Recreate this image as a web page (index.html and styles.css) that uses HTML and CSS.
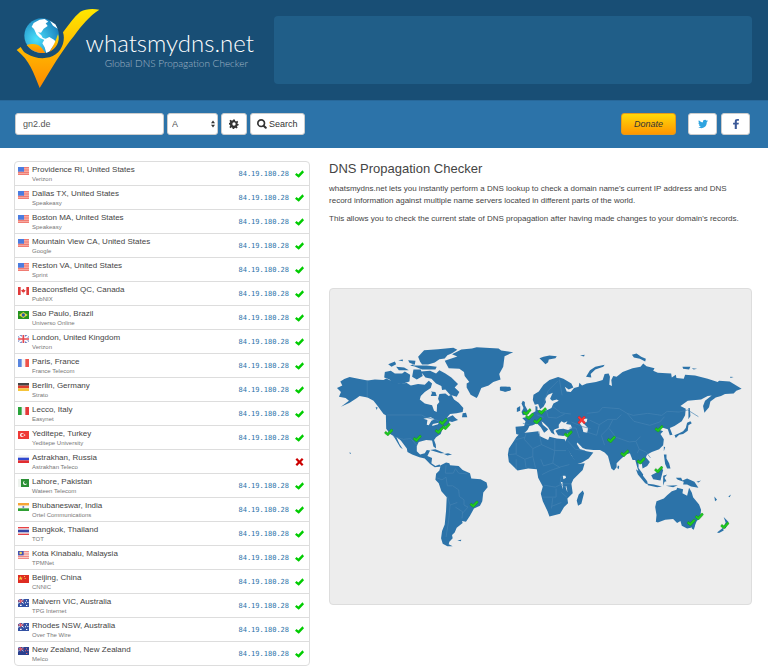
FILE: index.html
```html
<!DOCTYPE html>
<html lang="en">
<head>
    <meta charset="UTF-8">
    <meta name="viewport" content="width=device-width, initial-scale=1.0">
    <title>whatsmydns.net - Global DNS Propagation Checker</title>
    <link rel="stylesheet" href="styles.css">
</head>
<body>
    <!-- Shared icons and flags -->
    <svg class="sprite" aria-hidden="true">
        <defs>
            <symbol id="ok" viewBox="0 0 24 20"><path d="M0 12l4-5 5 4L20 0l4 5L10 20z"/></symbol>
            <symbol id="fail" viewBox="0 0 20 20"><path d="M4 0l6 6 6-6 4 4-6 6 6 6-4 4-6-6-6 6-4-4 6-6-6-6z"/></symbol>
            <symbol id="us" viewBox="0 0 33 24"><path fill="#f8b5ac" d="M0 0h33v24H0z"/><path stroke="#ef7068" stroke-width="3" d="M0 2h33M0 9h33M0 16h33M0 22h33"/><path fill="#4a7ce0" d="M0 0h18v14H0z"/></symbol>
            <symbol id="ca" viewBox="0 0 33 24"><path fill="#fff" d="M0 0h33v24H0z"/><path fill="#e03a3a" d="M0 0h8v24H0zM25 0h8v24h-8zM16 5l3 4 4 1-4 6h-2v4h-1v-4h-3l-4-6 4-1z"/></symbol>
            <symbol id="br" viewBox="0 0 33 24"><path fill="#259321" d="M0 0h33v24H0z"/><path fill="#e8dc42" d="M16 3l13 9-13 9L3 12z"/><circle cx="16" cy="12" r="5" fill="#2b59a4"/></symbol>
            <symbol id="gb" viewBox="0 0 33 24"><path fill="#6a7ec2" d="M0 0h33v24H0z"/><path stroke="#fff" stroke-width="5" d="M0 0l33 24M33 0L0 24"/><path stroke="#fff" stroke-width="9" d="M16 0v24M0 12h33"/><path stroke="#e34850" stroke-width="5" d="M16 0v24M0 12h33"/></symbol>
            <symbol id="fr" viewBox="0 0 33 24"><path fill="#f3f3f3" d="M0 0h33v24H0z"/><path fill="#5885df" d="M0 0h11v24H0z"/><path fill="#ef5249" d="M22 0h11v24H22z"/></symbol>
            <symbol id="de" viewBox="0 0 33 24"><path fill="#444" d="M0 0h33v8H0z"/><path fill="#df3b2d" d="M0 8h33v8H0z"/><path fill="#f5c43b" d="M0 16h33v8H0z"/></symbol>
            <symbol id="it" viewBox="0 0 33 24"><path fill="#f3f3f3" d="M0 0h33v24H0z"/><path fill="#29a43b" d="M0 0h11v24H0z"/><path fill="#e6393a" d="M22 0h11v24H22z"/></symbol>
            <symbol id="tr" viewBox="0 0 33 24"><path fill="#ee3a36" d="M0 0h33v24H0z"/><circle cx="12" cy="12" r="6" fill="#fff"/><circle cx="14" cy="12" r="4" fill="#ee3a36"/><path fill="#fff" d="M18 10l5 2-5 3z"/></symbol>
            <symbol id="ru" viewBox="0 0 33 24"><path fill="#f3f3f3" d="M0 0h33v8H0z"/><path fill="#2f48cf" d="M0 8h33v8H0z"/><path fill="#e22d30" d="M0 16h33v8H0z"/></symbol>
            <symbol id="pk" viewBox="0 0 33 24"><path fill="#eef3ee" d="M0 0h9v24H0z"/><path fill="#2b8f35" d="M9 0h24v24H9z"/><circle cx="21" cy="12" r="6" fill="#fff"/><circle cx="23" cy="10" r="5" fill="#2b8f35"/></symbol>
            <symbol id="in" viewBox="0 0 33 24"><path fill="#f6a537" d="M0 0h33v8H0z"/><path fill="#f6f6f6" d="M0 8h33v8H0z"/><path fill="#2fa034" d="M0 16h33v8H0z"/><circle cx="16" cy="12" r="3" fill="#6b78c4"/></symbol>
            <symbol id="th" viewBox="0 0 33 24"><path fill="#e64145" d="M0 0h33v24H0z"/><path fill="#f6f6f6" d="M0 4h33v16H0z"/><path fill="#3745a5" d="M0 8h33v8H0z"/></symbol>
            <symbol id="my" viewBox="0 0 33 24"><path fill="#fbdcd9" d="M0 0h33v24H0z"/><path stroke="#ee7a75" stroke-width="3" d="M0 2h33M0 9h33M0 16h33M0 22h33"/><path fill="#4453b5" d="M0 0h17v13H0z"/><circle cx="8" cy="6" r="4" fill="#f3d95a"/></symbol>
            <symbol id="cn" viewBox="0 0 33 24"><path fill="#de2b22" d="M0 0h33v24H0z"/><path fill="#f7cf3e" d="M8 3l2 5h5l-4 3 2 5-5-3-5 3 2-5-4-3h5zM18 3h3v3h-3zM20 9h3v3h-3z"/></symbol>
            <symbol id="au" viewBox="0 0 33 24"><path fill="#3351a3" d="M0 0h33v24H0z"/><path stroke="#fff" stroke-width="3" d="M0 0l17 13M17 0L0 13"/><path stroke="#e8515a" stroke-width="3" d="M8 0v13M0 6h17"/><path fill="#fff" d="M6 17h5v4H6zM24 4h3v3h-3zM21 10h3v3h-3zM28 9h3v3h-3zM24 18h4v3h-4z"/></symbol>
            <symbol id="nz" viewBox="0 0 33 24"><path fill="#2b408f" d="M0 0h33v24H0z"/><path stroke="#a9b2dd" stroke-width="3" d="M0 0l17 13M17 0L0 13"/><path stroke="#e8515a" stroke-width="3" d="M8 0v13M0 6h17"/><path fill="#ea6670" d="M24 4h3v3h-3zM21 10h3v3h-3zM28 9h3v3h-3zM24 18h4v3h-4z"/></symbol>
        </defs>
    </svg>

    <!-- Header -->
    <header class="header">
        <a href="/" class="brand">
            <svg class="brand-logo" viewBox="0 0 252 240" aria-hidden="true">
                <defs>
                    <linearGradient id="gold" x1="0" y1="0" x2="0" y2="1">
                        <stop offset="0" stop-color="#ffe800"/>
                        <stop offset="1" stop-color="#ff8a00"/>
                    </linearGradient>
                    <radialGradient id="sea" cx=".35" cy=".6" r=".75">
                        <stop offset="0" stop-color="#4be0fb"/>
                        <stop offset="1" stop-color="#1579b8"/>
                    </radialGradient>
                </defs>
                <path fill="url(#gold)" d="M2 126l12-9c8 14 12 17 20 21 24 15 62 18 85 1 22-15 29-46 22-66 16-22 32-45 52-62 16-9 38-10 57-6-30 19-54 48-76 79-38 46-68 99-103 156C52 193 42 159 2 126z"/>
                <circle cx="77" cy="83" r="52" fill="url(#sea)"/>
                <path fill="#fff" d="M53 45l18-10 15-2 11 8-8 5 6 8-12 8-8 12-9-1 10 9 4 7 10 4-3 4-15-7-10-10-8-17-7-7zM86 94l14-7 15 9 6 9-12 12-8 13-10 5-5-17-7-12zM102 39l16 10 7 13-14-9z"/>
                <path fill="url(#gold)" d="M32 111c19-6 38-2 46 10l10 14c-19 2-40-4-56-24zM126 79c7 20-5 44-26 53 13-17 20-36 26-53z"/>
            </svg>
            <span class="brand-text">
                <span class="brand-name">whatsmydns.net</span>
                <span class="brand-tagline">Global DNS Propagation Checker</span>
            </span>
        </a>
        <div class="banner"></div>
    </header>

    <!-- Search bar -->
    <div class="toolbar">
        <form class="search" action="/">
            <input class="field domain" type="text" value="gn2.de" aria-label="Domain name">
            <span class="select-wrap">
                <select class="field type" aria-label="Record type">
                    <option>A</option>
                    <option>AAAA</option>
                    <option>CNAME</option>
                    <option>MX</option>
                    <option>NS</option>
                    <option>TXT</option>
                </select>
                <svg class="arrows" viewBox="0 0 10 18" aria-hidden="true"><path d="M5 0l5 7H0zM5 18l5-7H0z"/></svg>
            </span>
            <button class="btn btn-icon" type="button" aria-label="Settings">
                <svg class="icon" viewBox="0 0 24 24" aria-hidden="true"><path fill-rule="evenodd" d="M10 1h4l1 4 2 1 3-2 2 3-2 3 1 2 2 0v3l-3 1-1 2 2 2-3 3-3-2-2 1-1 2h-3l-1-3-2-1-3 2-2-3 2-3-1-2-3-1v-3l3-1 1-2-2-3 3-2 3 2 2-1zM12 8a4 4 0 1 0 0 8 4 4 0 1 0 0-8z"/></svg>
            </button>
            <button class="btn" type="submit">
                <svg class="icon" viewBox="0 0 24 24" aria-hidden="true"><circle cx="10" cy="10" r="8" fill="none" stroke="#333" stroke-width="4"/><path stroke="#333" stroke-width="5" stroke-linecap="round" d="M16 16l5 5"/></svg>
                Search
            </button>
        </form>
        <div class="links">
            <a href="/donate" class="donate">Donate</a>
            <a href="/twitter" class="btn btn-social" aria-label="Twitter">
                <svg class="icon" viewBox="0 0 24 24" aria-hidden="true"><path fill="#2fa4e0" d="M24 5l-3 3c0 10-7 14-13 14-3 0-6-1-8-2 3 0 5-1 7-2-2 0-4-1-5-4h3c-3-1-4-3-4-5l2 1C1 8 1 5 2 3c3 3 6 5 10 5-1-4 2-6 5-6 1 0 3 1 4 2l3-1-2 3z"/></svg>
            </a>
            <a href="/facebook" class="btn btn-social" aria-label="Facebook">
                <svg class="icon" viewBox="0 0 24 24" aria-hidden="true"><path fill="#3b5998" d="M9 24V13H5V9h4V6c0-4 2-6 6-6h4v4h-3c-2 0-2 1-2 2v3h5l-1 4h-4v11z"/></svg>
            </a>
        </div>
    </div>

    <!-- Main Content -->
    <main class="content">
        <table class="servers">
            <tbody>
                <tr><td class="flag"><svg><use href="#us"/></svg></td><td class="place">Providence RI, United States<small>Verizon</small></td><td class="ip">84.19.180.28</td><td class="status"><svg><use href="#ok"/></svg></td></tr>
                <tr><td class="flag"><svg><use href="#us"/></svg></td><td class="place">Dallas TX, United States<small>Speakeasy</small></td><td class="ip">84.19.180.28</td><td class="status"><svg><use href="#ok"/></svg></td></tr>
                <tr><td class="flag"><svg><use href="#us"/></svg></td><td class="place">Boston MA, United States<small>Speakeasy</small></td><td class="ip">84.19.180.28</td><td class="status"><svg><use href="#ok"/></svg></td></tr>
                <tr><td class="flag"><svg><use href="#us"/></svg></td><td class="place">Mountain View CA, United States<small>Google</small></td><td class="ip">84.19.180.28</td><td class="status"><svg><use href="#ok"/></svg></td></tr>
                <tr><td class="flag"><svg><use href="#us"/></svg></td><td class="place">Reston VA, United States<small>Sprint</small></td><td class="ip">84.19.180.28</td><td class="status"><svg><use href="#ok"/></svg></td></tr>
                <tr><td class="flag"><svg><use href="#ca"/></svg></td><td class="place">Beaconsfield QC, Canada<small>PubNIX</small></td><td class="ip">84.19.180.28</td><td class="status"><svg><use href="#ok"/></svg></td></tr>
                <tr><td class="flag"><svg><use href="#br"/></svg></td><td class="place">Sao Paulo, Brazil<small>Universo Online</small></td><td class="ip">84.19.180.28</td><td class="status"><svg><use href="#ok"/></svg></td></tr>
                <tr><td class="flag"><svg><use href="#gb"/></svg></td><td class="place">London, United Kingdom<small>Verizon</small></td><td class="ip">84.19.180.28</td><td class="status"><svg><use href="#ok"/></svg></td></tr>
                <tr><td class="flag"><svg><use href="#fr"/></svg></td><td class="place">Paris, France<small>France Telecom</small></td><td class="ip">84.19.180.28</td><td class="status"><svg><use href="#ok"/></svg></td></tr>
                <tr><td class="flag"><svg><use href="#de"/></svg></td><td class="place">Berlin, Germany<small>Strato</small></td><td class="ip">84.19.180.28</td><td class="status"><svg><use href="#ok"/></svg></td></tr>
                <tr><td class="flag"><svg><use href="#it"/></svg></td><td class="place">Lecco, Italy<small>Easynet</small></td><td class="ip">84.19.180.28</td><td class="status"><svg><use href="#ok"/></svg></td></tr>
                <tr><td class="flag"><svg><use href="#tr"/></svg></td><td class="place">Yeditepe, Turkey<small>Yeditepe University</small></td><td class="ip">84.19.180.28</td><td class="status"><svg><use href="#ok"/></svg></td></tr>
                <tr><td class="flag"><svg><use href="#ru"/></svg></td><td class="place">Astrakhan, Russia<small>Astrakhan Teleco</small></td><td class="ip"></td><td class="status failed"><svg><use href="#fail"/></svg></td></tr>
                <tr><td class="flag"><svg><use href="#pk"/></svg></td><td class="place">Lahore, Pakistan<small>Wateen Telecom</small></td><td class="ip">84.19.180.28</td><td class="status"><svg><use href="#ok"/></svg></td></tr>
                <tr><td class="flag"><svg><use href="#in"/></svg></td><td class="place">Bhubaneswar, India<small>Ortel Communications</small></td><td class="ip">84.19.180.28</td><td class="status"><svg><use href="#ok"/></svg></td></tr>
                <tr><td class="flag"><svg><use href="#th"/></svg></td><td class="place">Bangkok, Thailand<small>TOT</small></td><td class="ip">84.19.180.28</td><td class="status"><svg><use href="#ok"/></svg></td></tr>
                <tr><td class="flag"><svg><use href="#my"/></svg></td><td class="place">Kota Kinabalu, Malaysia<small>TPMNet</small></td><td class="ip">84.19.180.28</td><td class="status"><svg><use href="#ok"/></svg></td></tr>
                <tr><td class="flag"><svg><use href="#cn"/></svg></td><td class="place">Beijing, China<small>CNNIC</small></td><td class="ip">84.19.180.28</td><td class="status"><svg><use href="#ok"/></svg></td></tr>
                <tr><td class="flag"><svg><use href="#au"/></svg></td><td class="place">Malvern VIC, Australia<small>TPG Internet</small></td><td class="ip">84.19.180.28</td><td class="status"><svg><use href="#ok"/></svg></td></tr>
                <tr><td class="flag"><svg><use href="#au"/></svg></td><td class="place">Rhodes NSW, Australia<small>Over The Wire</small></td><td class="ip">84.19.180.28</td><td class="status"><svg><use href="#ok"/></svg></td></tr>
                <tr><td class="flag"><svg><use href="#nz"/></svg></td><td class="place">New Zealand, New Zealand<small>Melco</small></td><td class="ip">84.19.180.28</td><td class="status"><svg><use href="#ok"/></svg></td></tr>
            </tbody>
        </table>

        <section class="info">
            <h1>DNS Propagation Checker</h1>
            <p>whatsmydns.net lets you instantly perform a DNS lookup to check a domain name's current IP address and DNS record information against multiple name servers located in different parts of the world.</p>
            <p>This allows you to check the current state of DNS propagation after having made changes to your domain's records.</p>

            <svg class="map" viewBox="0 0 1266 948" role="img" aria-label="Propagation map">
                <!-- Americas -->
                <g transform="translate(-15 138)">
                    <path class="land" d="M36 160l16-8-6-12 12-7 16-6 26 5 28 5 22-3 26 2 8-5 16 8 22 7 24-1 12 7 22-4 20 2 12-12 10 8-4 14-18 12-12 12-3 10 15 12 22 6 6 16 8 4 1-22 7-8-4-10 4-14 18-2 10 8 8-4 8 14 14 10 14 16-2 12-18 4-20 2-10 12 18-8 8 8 8 6-18 6-8-2-2 10-12 6-8 10-4 12-14 10-6 8 5 14 1 12-8-6-4-18-18-2-22 6-6 12v16l10 10 14-4 6-10 10 2-8 16 14 6-2 16 12 8 12-4 6 6-20 2-14-10-16-16-16-4-22-8-14-8-2-10-18-24-14-12 10 22 10 16-8-6-12-20-8-14-10-6-12-16-1-40-7-4-16-22-14-18-18-10-24-4-8 6-22 14-26 12 24-18-10-8-20-4 6-14z"/>
                    <path class="land" d="M348 392L364 384 374 386 376 392 402 394 414 406 436 416 440 432 468 434 486 444 489 458 476 474 473 500 466 514 448 522 436 544 424 562 412 560 414 566 396 580 390 594 382 602 384 612 374 622 372 630 384 636 368 636 354 628 349 612 352 590 360 570 364 530 366 488 350 470 342 446 332 436 334 418 344 408z"/>
                    <path class="land" d="M360 78l38-13-16-7 28-14 32-3 14-4 66 4 8 6 36 5-26 12-4 32-12 22 4 16-22 8-14 10-22 8-10 24-4 6-18-10-12-22 0-12 8-4-14-18-2-12-14-10-32-2zM526 156l30 0 4 10-18 5-16-4zM280 66l18-20 42-3 46-4 12 6-16 10-14 6-8 10-16 2-14 10-20 6-18 0-6-8zM288 110l28-2 18 8 10-10 18 10 18 12 20 20-10 10 14 14-8 14-20-6-14-16-10 2-2-12-16-8-14-14-18-4zM180 112l18-4 12 8 22 0 8-6 16 10-2 20-24 8-26-2-10-12-16-6zM190 88l20-8 4 8-14 8zM214 96l24 2 14 8-30 0zM250 76l22 2-2 12-16-6zM266 104l22 0 6 20-18 10-14-8zM318 170l14 2 4 12-18 0 4-10zM262 92h44l30 4-4 8-40 0zM414 236l10-2 4 14-16 0zM316 346l16-2 28 12-12 0zM358 358l12-2 12 4-14 3zM152 218l6 0-2 8zM398 618l12-2-2 5zM74 352l4 4-3 3zM220 76l14-2v5zM256 92l10-4v6z"/>
                    <path class="water" d="M296 252l22-4 12 6-10 4-8 14-6-2 2-14zM324 268l18-4-2 5-18 5z"/>
                    <path class="border" d="M127 137v51M186 241h104l16 8 26 6 20 8 20-10M206 306l30 8 22-2 18 20M364 392l-2 24 24 0 6-14 10 14 26 2M336 430l16 6 12-8 4 26 16 0 18 12 2 20 14 10 0 16 12 6-18 20M368 486l8 26 22-8M376 512l-4 46-8 50M392 518l22 14-2 20"/>
                </g>
                <!-- Europe, Africa, Asia, Oceania -->
                <g transform="translate(510 138)">
                    <path class="land" d="M100 196l2-16 16-10 14-20 18-14 26-9 16 5 24 14 6 12-14 6-12-8 6 14 12 2 10-12 14-4 2-12 8 8 14-6 28-4 20-6 6-18 12-2 4 10-2 24 8 4-2-18 6-12 10 2 18-14 30-12 24-4 8-10 10 8 24 6-4 8 14 6 40 2 2 12 12-8 2 10 22 2 4-12 30 2 38 10 30 10 4-4 32 2 36 22-16 6-8 8-26 2-12 6-16 4-16 12-4 18-14 16-4-20 6-16 20-16-12 2-20 10-40 4-22 16 16 8-2 20-10 18-22 14-14 6 8 20-8 2-6-18-20-6-10 6 16 6-8 8 10 16-2 18-12 12-22 8-14 8-4 8 12 14-8 12-14 8-2-14-10-6 0 18 14 20-2 10-10-12-6-20-6-22-8 0-8-20-12 4-16 14-12 12 0 12-8 10-8-6-10-38-10-10-14-8-20 0-22-2-10-4-16-16-2 4 10 16 20 6 20 4-14 18-20 12-18 6-4-12-14-22-14-24-2-8 8-16 2-12-14 8-16-2-8-14 10-4 14-2 14 4 12-6-4-10-14-2 4-8-10 4-8-4-8 10 0 10-12 4-4 4 4 12-10-6-10-16-14-14-6-4 4 10 16 14-4 4-8 6-10-16-12-12-12 6-10 2-6 12-10 10-12 6-12-4-2-22 26-2 4-14-10-10 18-4 14-12 8-4 0-16 6 2 0 10 22 4 20-10 6-14 16-8-6-4-14 4-6-6 8-18-14 6-10 12 4 10-8 14-10 8-6-16-10 2z"/>
                    <path class="land" d="M62 296l36-4 18-2 4 14 26 12 4-10 22 6 24 2 6 20 14 28 14 18 4 8 22-2-6 20-28 28-6 14 4 28-16 16 2 14-12 12-12 20-32 8-6-16-14-30-6-22 6-22-14-26-4-26-26-2-32 6-26-26-3-22 3-18 16-24 6-10z"/>
                    <path class="land" d="M250 468l4 8-8 32-10 6-4-16 6-18zM66 232l6-12-6-14 4-8 6 4 0 10 10 18 2 8-18 4zM52 220l10-6 0 14-10 4zM4 156l14 0 16 2-4 10-14 2-12-4zM120 70l12-4 18-4 22 2-4 6-20 4-2 8-8 6-8-8zM242 62l14-2-2 5zM260 126l12-20 16-10 28-6-4 6-24 8-14 14 2 10zM398 60l14-4 14 10 14 6-2 8-16-8-18-4zM550 96l24 0-4 8-18-2zM578 100l16 2-10 2zM694 126l10 1-10 3zM568 220h4l2 24-6 10zM564 264l10-4 4 6-10 6-2 16-14 10-12 2-10 10-4-8 14-6 12-6 8-10zM494 336l4 2-4 12zM356 392l4 4-2 8-4-4zM410 404l14 10 20 26 2 10-8-4-22-26zM446 448l18 2 24 6-14 2-28-6zM456 422l16-8 12-16 8 8-8 32-22-4zM492 424l12-4-8 10 6 10-6 2-4 12zM494 360l8 0 0 12 8 14 4 16-10 0-6-14zM530 430l16 0 4 8 14-6 22 10 12 18-22-4-12-6-12 0 2-8-18-6zM500 454l36-2-14 6zM592 442l14-4-8 6zM646 486l8 10-6 4zM688 486l8-6-4 8z"/>
                    <path class="land" d="M472 500l22-8 10-10 14-12 14-4 2-6 18 4-2 12 14 8 6-24 8 14 4 14 18 22 6 16-2 20-12 16-6 16-22 4-16-8-4-14-10 6-12-12-24 2-22 8-6-2 2-20-4-24zM580 576l8-2-4 12-6-4zM674 548l14 14-8 20-6-4 6-14zM654 594l18-14 2 8-14 8z"/>
                    <path class="water" d="M250 252l14 0-2 10-10 4 14 14-2 14-12-2-4-16-8-12zM190 424l8 0 2 6-8 4zM184 442l6 22 0-20zM198 456l6 18-2-18z"/>
                    <path class="border" d="M46 316l30-8M80 296l-6 18 26 28 26-12-8-40M28 360l22-2 0-34M50 360l26 14 24-8 0-24M126 330l40 18 0-36M166 348l34 0M166 348l-6 38-28 8-8-20M76 374l4 28M50 374v30M100 366l8 34M160 386l20 12 30-8M128 420l24-12 30-10M134 452l34 6 20-10 26 0M130 488h40l0-26M160 490l-4 32M156 516l30-12M186 474l16 14M186 424l-4 24 20 12M132 208l14-40 30-30M180 134l8 48M140 222l6 26 26 2 24-12M158 214l26 20 30 4M112 240l20 8M70 266l20 4M216 262l34 14 24 6M262 236l36-4 12-14 50 4 24 14 18 6 44-6 42 6 16-12 36 2 26-6 32 20M384 236l20 24 48 12 30-10 14-16M270 256l30 14 26-16 26 0 14-14M300 270l-8 32-30-10M340 256l-12 24-22 22 10 30M330 282l20 26 40 14 20-2 14-14M410 320l10 24-6 12M420 344l20 8 14 18M210 280l20 0 10 30M204 318l24 26 28 4"/>
                </g>
                <!-- Server results -->
                <g class="pins">
                    <use href="#ok" x="163" y="420" width="27" height="22"/>
                    <use href="#ok" x="249" y="438" width="27" height="22"/>
                    <use href="#ok" x="327" y="388" width="27" height="22"/>
                    <use href="#ok" x="336" y="402" width="27" height="22"/>
                    <use href="#ok" x="315" y="414" width="27" height="22"/>
                    <use href="#ok" x="420" y="636" width="27" height="22"/>
                    <use href="#ok" x="579" y="359" width="27" height="22"/>
                    <use href="#ok" x="587" y="372" width="27" height="22"/>
                    <use href="#ok" x="625" y="356" width="27" height="22"/>
                    <use href="#ok" x="611" y="385" width="27" height="22"/>
                    <use href="#ok" x="703" y="425" width="27" height="22"/>
                    <use href="#ok" x="833" y="441" width="27" height="22"/>
                    <use href="#ok" x="873" y="483" width="27" height="22"/>
                    <use href="#ok" x="922" y="506" width="27" height="22"/>
                    <use href="#ok" x="976" y="409" width="27" height="22"/>
                    <use href="#ok" x="975" y="532" width="27" height="22"/>
                    <use href="#ok" x="1097" y="673" width="27" height="22"/>
                    <use href="#ok" x="1073" y="691" width="27" height="22"/>
                    <use href="#ok" x="1174" y="700" width="27" height="22"/>
                    <use class="pin-fail" href="#fail" x="745" y="382" width="24" height="24"/>
                </g>
            </svg>
        </section>
    </main>
</body>
</html>
```

FILE: styles.css
```css
* {
    margin: 0;
    padding: 0;
    box-sizing: border-box;
}

:root {
    --navy: #184e75;
    --blue: #2c73a9;
    --text: #444;
    --line: #ddd;
    --green: #0c0;
    --red: #c00;
}

body {
    background: #fff;
    color: var(--text);
    font-family: "Liberation Sans", Arial, sans-serif;
    font-size: 9px;
    line-height: 12px;
}

a {
    text-decoration: none;
}

.sprite {
    position: absolute;
    width: 0;
    height: 0;
}

/* Header */
.header {
    display: flex;
    gap: 20px;
    height: 100px;
    padding: 8px 16px 16px;
    background: var(--navy);
}

.brand {
    display: flex;
    gap: 4px;
    color: #fff;
}

.brand-logo {
    width: 84px;
    height: 80px;
}

.brand-text {
    width: 150px;
    display: flex;
    flex-direction: column;
    align-items: flex-end;
    padding-top: 21px;
    font-family: Lato, sans-serif;
    font-weight: 300;
    white-space: nowrap;
}

.brand-name {
    font-size: 24px;
    line-height: 28px;
}

.brand-tagline {
    padding-right: 6px;
    color: #a3b8c8;
    font-size: 10px;
    line-height: 12px;
}

.banner {
    flex: 1;
    margin-top: 8px;
    background: #205e88;
    border-radius: 4px;
}

/* Search bar */
.toolbar {
    display: flex;
    justify-content: space-between;
    height: 48px;
    padding: 12px 18px 12px 15px;
    background: var(--blue);
    border-top: 1px solid #28689a;
}

.search,
.links {
    display: flex;
    gap: 3px;
}

.links {
    gap: 4px;
}

.field,
.btn {
    height: 22px;
    border: 1px solid #ccc;
    border-radius: 3px;
    background: #fff;
    color: #333;
    font-family: inherit;
    font-size: 9px;
}

.field {
    padding: 0 7px;
    color: #555;
}

.domain {
    width: 149px;
}

.select-wrap {
    position: relative;
}

.type {
    width: 51px;
    padding: 0 4px;
    appearance: none;
}

.arrows {
    position: absolute;
    top: 7px;
    right: 3px;
    width: 4px;
    height: 8px;
    fill: #333;
}

.btn {
    display: flex;
    align-items: center;
    justify-content: center;
    gap: 2px;
    padding: 0 6px;
}

.btn-icon {
    width: 26px;
}

.btn-social {
    width: 29px;
}

.icon {
    flex: none;
    width: 10px;
    height: 10px;
    fill: #333;
}

.donate {
    width: 55px;
    height: 22px;
    margin-right: 8px;
    border: 1px solid #e59a1a;
    border-radius: 3px;
    background: linear-gradient(#ffd90a, #ff9600);
    color: #333;
    font-style: italic;
    line-height: 20px;
    text-align: center;
}

/* Content */
.content {
    display: grid;
    grid-template-columns: 7fr 10fr;
    align-items: start;
    gap: 19px;
    padding: 13px 16px 6px 14px;
}

/* Server list */
.servers {
    width: 100%;
    border: 1px solid var(--line);
    border-radius: 4px;
    border-spacing: 0;
}

.servers td {
    height: 24px;
    border-bottom: 1px solid var(--line);
    vertical-align: top;
}

.servers tr:last-child td {
    height: 23px;
    border-bottom: none;
}

.servers svg {
    display: block;
}

.flag {
    width: 17px;
    padding: 5px 0 0 3px;
}

.flag svg {
    width: 11px;
    height: 8px;
}

.place {
    padding-top: 3px;
    font-size: 8px;
    line-height: 10px;
}

.place small {
    display: block;
    color: #777;
    font-size: 6px;
    line-height: 8px;
}

.ip {
    padding-top: 6px;
    color: var(--blue);
    font-family: "DejaVu Sans Mono", monospace;
    font-size: 7px;
    line-height: 12px;
    text-align: right;
}

.status {
    width: 20px;
    padding: 8px 0 0 6px;
    fill: var(--green);
}

.status svg {
    width: 9px;
    height: 8px;
}

.failed {
    fill: var(--red);
}

/* Info */
.info h1 {
    margin-bottom: 6px;
    font-size: 13px;
    font-weight: 400;
    line-height: 16px;
}

.info p {
    margin-bottom: 6px;
    padding-right: 6px;
    font-size: 8px;
    line-height: 12px;
}

.map {
    display: block;
    width: 100%;
    margin-top: 63px;
    border: 1px solid var(--line);
    border-radius: 4px;
    background: #ededed;
}

.land {
    fill: var(--blue);
}

.water {
    fill: #ededed;
}

.border {
    fill: none;
    stroke: #4583b3;
    stroke-width: 2;
}

.pins {
    fill: #1fc81f;
    stroke: #14801c;
    stroke-width: 1;
}

.pin-fail {
    fill: #f33;
    stroke: #b22;
}
```
